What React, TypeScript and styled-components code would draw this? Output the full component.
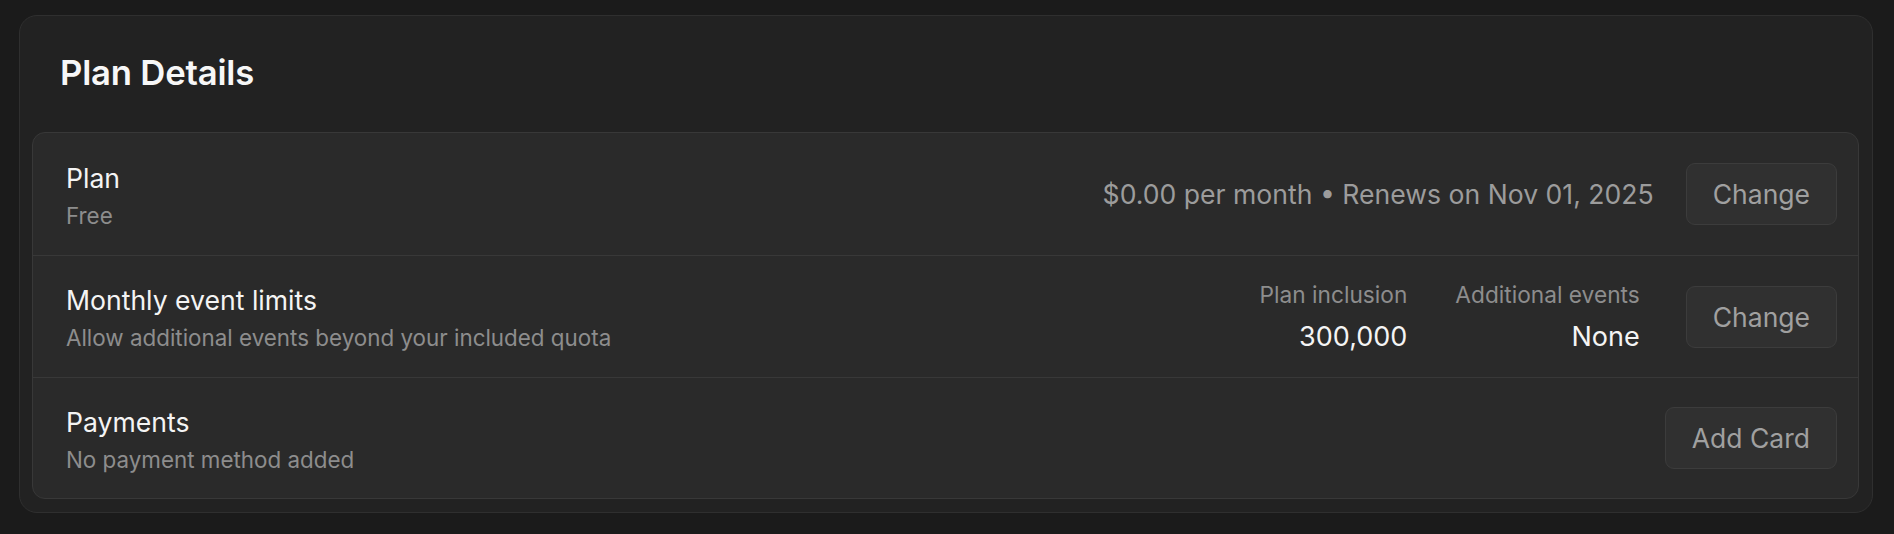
import React from "react";
import styled, { createGlobalStyle } from "styled-components";

const GlobalStyle = createGlobalStyle`
  html, body {
    margin: 0;
    padding: 0;
    background: #1b1b1b;
  }
  body {
    font-family: Inter, "Noto Sans", "Liberation Sans", sans-serif;
    -webkit-font-smoothing: antialiased;
  }
  * { box-sizing: border-box; }
`;

const Page = styled.div`
  padding: 15px 21px 20px 19px;
`;

const Card = styled.section`
  background: #222222;
  border: 1px solid #2f2f2f;
  border-radius: 18px;
  padding: 0 13px 13px 12px;
`;

const Header = styled.header`
  padding: 35px 0 39px 28px;
`;

const Title = styled.h2`
  margin: 0;
  font-size: 34.7px;
  line-height: 42px;
  font-weight: 600;
  color: #f7f7f7;
  letter-spacing: -0.2px;
`;

const Panel = styled.div`
  background: #2a2a2a;
  border: 1px solid #383838;
  border-radius: 13px;
  overflow: hidden;
`;

const Row = styled.div`
  display: flex;
  align-items: center;
  justify-content: space-between;
  height: 122px;
  padding: 0 21px 0 33px;
  & + & {
    border-top: 1px solid #383838;
  }
  &:last-child {
    height: 121px;
  }
`;

const Info = styled.div`
  display: flex;
  flex-direction: column;
  gap: 4px;
  margin-top: 3px;
`;

const RowTitle = styled.div`
  font-size: 26.6px;
  line-height: 36px;
  color: #f4f4f4;
`;

const RowSub = styled.div`
  font-size: 22.4px;
  line-height: 32px;
  color: #8d8d8d;
`;

const Right = styled.div<{ $gap: number }>`
  display: flex;
  align-items: center;
  gap: ${(p) => p.$gap}px;
`;

const Summary = styled.div`
  font-size: 26.6px;
  line-height: 36px;
  color: #9c9c9c;
`;

const Stats = styled.div`
  display: flex;
  gap: 48px;
`;

const Stat = styled.div`
  display: flex;
  flex-direction: column;
  align-items: flex-end;
  gap: 8px;
`;

const StatLabel = styled.div`
  font-size: 22.7px;
  line-height: 32px;
  color: #8d8d8d;
`;

const StatValue = styled.div`
  font-size: 27px;
  line-height: 36px;
  color: #f4f4f4;
`;

const Button = styled.button`
  height: 62px;
  padding: 0 26px;
  background: #303030;
  border: 1px solid #3c3c3c;
  border-radius: 9px;
  color: #a0a0a0;
  font-family: Inter, "Noto Sans", "Liberation Sans", sans-serif;
  font-size: 26.5px;
  cursor: pointer;
`;

export default function App() {
  return (
    <>
      <GlobalStyle />
      <Page>
        <Card>
          <Header>
            <Title>Plan Details</Title>
          </Header>
          <Panel>
            <Row>
              <Info>
                <RowTitle>Plan</RowTitle>
                <RowSub>Free</RowSub>
              </Info>
              <Right $gap={32}>
                <Summary>$0.00 per month • Renews on Nov 01, 2025</Summary>
                <Button>Change</Button>
              </Right>
            </Row>
            <Row>
              <Info>
                <RowTitle>Monthly event limits</RowTitle>
                <RowSub>Allow additional events beyond your included quota</RowSub>
              </Info>
              <Right $gap={46}>
                <Stats>
                  <Stat>
                    <StatLabel>Plan inclusion</StatLabel>
                    <StatValue>300,000</StatValue>
                  </Stat>
                  <Stat>
                    <StatLabel>Additional events</StatLabel>
                    <StatValue>None</StatValue>
                  </Stat>
                </Stats>
                <Button>Change</Button>
              </Right>
            </Row>
            <Row>
              <Info>
                <RowTitle>Payments</RowTitle>
                <RowSub>No payment method added</RowSub>
              </Info>
              <Right $gap={32}>
                <Button>Add Card</Button>
              </Right>
            </Row>
          </Panel>
        </Card>
      </Page>
    </>
  );
}
